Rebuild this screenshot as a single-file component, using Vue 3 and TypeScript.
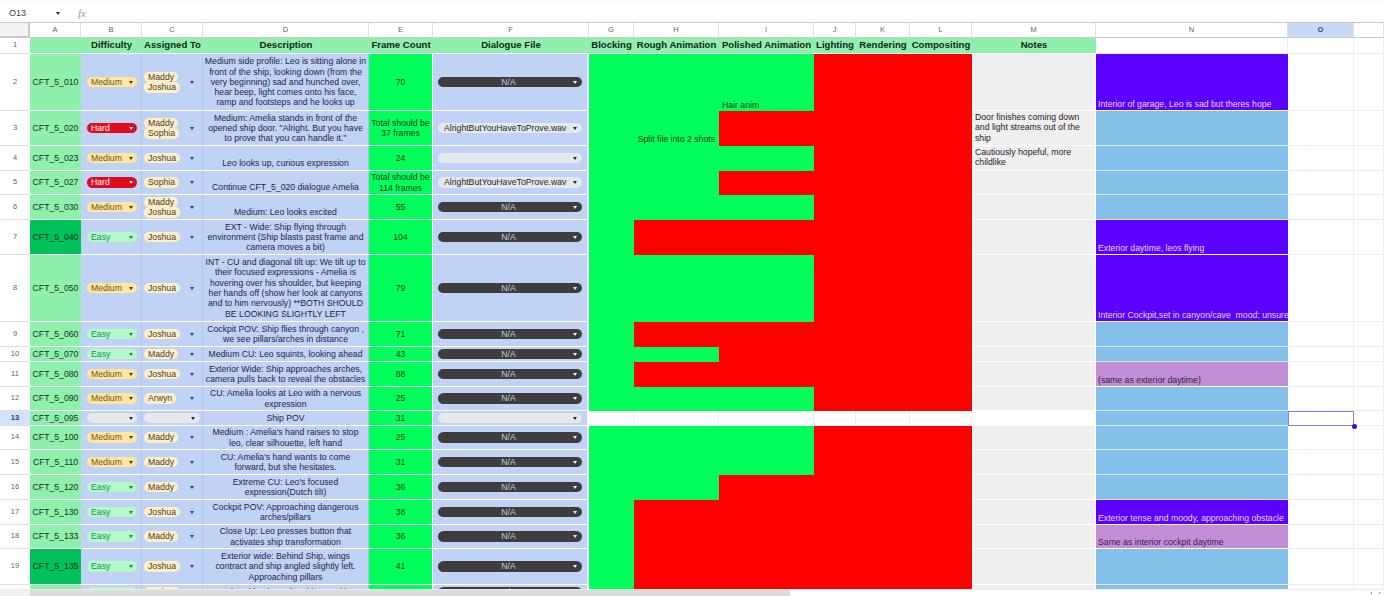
<script setup lang="ts">
interface Row {
  n: number
  h: number
  id: string
  diff: '' | 'Easy' | 'Medium' | 'Hard'
  who: string[]
  desc: string
  low?: boolean
  frames: string
  file: string
  red: number
  note?: string
  n2: 'blue' | 'purple' | 'lilac'
  n2text?: string
  dark?: boolean
}

const letters = ['A', 'B', 'C', 'D', 'E', 'F', 'G', 'H', 'I', 'J', 'K', 'L', 'M', 'N', 'O', '']
const heads = ['', 'Difficulty', 'Assigned To', 'Description', 'Frame Count', 'Dialogue File', 'Blocking', 'Rough Animation', 'Polished Animation', 'Lighting', 'Rendering', 'Compositing', 'Notes']
const wav = 'AlrightButYouHaveToProve.wav'

const rows: Row[] = [
  { n: 2, h: 57, id: 'CFT_5_010', diff: 'Medium', who: ['Maddy', 'Joshua'], desc: 'Medium side profile: Leo is sitting alone in front of the ship, looking down (from the very beginning) sad and hunched over, hear beep, light comes onto his face, ramp and footsteps and he looks up', frames: '70', file: 'N/A', red: 3, n2: 'purple', n2text: 'Interior of garage, Leo is sad but theres hope' },
  { n: 3, h: 35, id: 'CFT_5_020', diff: 'Hard', who: ['Maddy', 'Sophia'], desc: 'Medium: Amelia stands in front of the opened ship door. "Alright. But you have to prove that you can handle it."', frames: 'Total should be 37 frames', file: wav, red: 2, note: 'Door finishes coming down and light streams out of the ship', n2: 'blue' },
  { n: 4, h: 25, id: 'CFT_5_023', diff: 'Medium', who: ['Joshua'], desc: 'Leo looks up, curious expression', low: true, frames: '24', file: '', red: 3, note: 'Cautiously hopeful, more childlike', n2: 'blue' },
  { n: 5, h: 24, id: 'CFT_5_027', diff: 'Hard', who: ['Sophia'], desc: 'Continue CFT_5_020 dialogue Amelia', low: true, frames: 'Total should be 114 frames', file: wav, red: 2, n2: 'blue' },
  { n: 6, h: 25, id: 'CFT_5_030', diff: 'Medium', who: ['Maddy', 'Joshua'], desc: 'Medium: Leo looks excited', low: true, frames: '55', file: 'N/A', red: 3, n2: 'blue' },
  { n: 7, h: 35, id: 'CFT_5_040', diff: 'Easy', who: ['Joshua'], desc: 'EXT - Wide: Ship flying through environment (Ship blasts past frame and camera moves a bit)', frames: '104', file: 'N/A', red: 1, n2: 'purple', n2text: 'Exterior daytime, leos flying', dark: true },
  { n: 8, h: 67, id: 'CFT_5_050', diff: 'Medium', who: ['Joshua'], desc: 'INT - CU and diagonal tilt up: We tilt up to their focused expressions - Amelia is hovering over his shoulder, but keeping her hands off (show her look at canyons and to him nervously) **BOTH SHOULD BE LOOKING SLIGHTLY LEFT', frames: '79', file: 'N/A', red: 3, n2: 'purple', n2text: 'Interior Cockpit,set in canyon/cave  mood: unsure' },
  { n: 9, h: 25, id: 'CFT_5_060', diff: 'Easy', who: ['Joshua'], desc: 'Cockpit POV: Ship flies through canyon , we see pillars/arches in distance', frames: '71', file: 'N/A', red: 1, n2: 'blue' },
  { n: 10, h: 15, id: 'CFT_5_070', diff: 'Easy', who: ['Maddy'], desc: 'Medium CU: Leo squints, looking ahead', frames: '43', file: 'N/A', red: 2, n2: 'blue' },
  { n: 11, h: 25, id: 'CFT_5_080', diff: 'Medium', who: ['Joshua'], desc: 'Exterior Wide: Ship approaches arches, camera pulls back to reveal the obstacles', frames: '88', file: 'N/A', red: 1, n2: 'lilac', n2text: '(same as exterior daytime)' },
  { n: 12, h: 24, id: 'CFT_5_090', diff: 'Medium', who: ['Arwyn'], desc: 'CU: Amelia looks at Leo with a nervous expression', frames: '25', file: 'N/A', red: 3, n2: 'blue' },
  { n: 13, h: 15, id: 'CFT_5_095', diff: '', who: [], desc: 'Ship POV', frames: '31', file: '', red: -1, n2: 'blue' },
  { n: 14, h: 24, id: 'CFT_5_100', diff: 'Medium', who: ['Maddy'], desc: "Medium : Amelia's hand raises to stop\nleo, clear silhouette, left hand", frames: '25', file: 'N/A', red: 3, n2: 'blue' },
  { n: 15, h: 25, id: 'CFT_5_110', diff: 'Medium', who: ['Maddy'], desc: "CU: Amelia's hand wants to come forward, but she hesitates.", frames: '31', file: 'N/A', red: 3, n2: 'blue' },
  { n: 16, h: 25, id: 'CFT_5_120', diff: 'Easy', who: ['Maddy'], desc: "Extreme CU: Leo's focused expression(Dutch tilt)", frames: '36', file: 'N/A', red: 2, n2: 'blue' },
  { n: 17, h: 25, id: 'CFT_5_130', diff: 'Easy', who: ['Joshua'], desc: 'Cockpit POV: Approaching dangerous arches/pillars', frames: '38', file: 'N/A', red: 1, n2: 'purple', n2text: 'Exterior tense and moody, approaching obstacle' },
  { n: 18, h: 24, id: 'CFT_5_133', diff: 'Easy', who: ['Maddy'], desc: 'Close Up: Leo presses button that activates ship transformation', frames: '36', file: 'N/A', red: 1, n2: 'lilac', n2text: 'Same as interior cockpit daytime' },
  { n: 19, h: 36, id: 'CFT_5_135', diff: 'Easy', who: ['Joshua'], desc: 'Exterior wide: Behind Ship, wings\ncontract and ship angled slightly left.\nApproaching pillars', frames: '41', file: 'N/A', red: 1, n2: 'blue', dark: true },
  { n: 20, h: 16, id: 'CFT_5_137', diff: 'Easy', who: ['Joshua'], desc: 'Exterior Side view: The ship transitions', frames: '51', file: 'N/A', red: 1, n2: 'blue' },
]

const stages = [0, 1, 2, 3, 4, 5]
const rowTemplate = `15px 16px ${rows.map((r) => r.h + 'px').join(' ')}`

function stageClass(r: Row, i: number): string {
  if (r.red < 0) return 'stage-empty'
  return i >= r.red ? 'stage-red' : 'stage-green'
}

function stageText(r: Row, i: number): string {
  if (r.n === 2 && i === 2) return 'Hair anim'
  if (r.n === 3 && i === 1) return 'Split file into 2 shots'
  return ''
}
</script>

<template>
  <div class="page">
    <div class="topband"></div>
    <div class="formula">
      <span class="namebox">O13</span>
      <span class="arrow dark name-arrow"></span>
      <span class="fx">fx</span>
    </div>
    <div class="viewport">
      <div class="sheet" :style="{ gridTemplateRows: rowTemplate }">
        <div class="corner"></div>
        <div v-for="(l, i) in letters" :key="'col' + i" class="colhead" :class="{ on: l === 'O' }">{{ l }}</div>

        <div class="rowhead">1</div>
        <div v-for="(h, i) in heads" :key="'head' + i" class="title">{{ h }}</div>
        <div class="title-n"></div>
        <div class="blank"></div>
        <div class="blank"></div>

        <template v-for="r in rows" :key="r.n">
          <div class="rowhead" :class="{ on: r.n === 13 }">{{ r.n }}</div>
          <div class="cell shot" :class="{ dark: r.dark }">{{ r.id }}</div>
          <div class="cell blue chipcell">
            <span class="diff" :class="'d-' + (r.diff || 'none').toLowerCase()">
              <span>{{ r.diff }}</span><span class="arrow"></span>
            </span>
          </div>
          <div class="cell blue whocell">
            <template v-if="r.who.length">
              <div class="names">
                <span v-for="w in r.who" :key="w" class="name">{{ w }}</span>
              </div>
              <span class="arrow indigo"></span>
            </template>
            <span v-else class="noname"><span class="arrow dark"></span></span>
          </div>
          <div class="cell blue desc" :class="{ low: r.low }">
            <span>{{ r.desc }}</span>
          </div>
          <div class="cell frames">{{ r.frames }}</div>
          <div class="cell blue filecell">
            <span class="file" :class="r.file === 'N/A' ? 'file-na' : 'file-light'">
              <span class="file-text">{{ r.file }}</span>
              <span class="arrow"></span>
            </span>
          </div>
          <div v-for="i in stages" :key="i" class="stage" :class="[stageClass(r, i), 'st' + i]">
            <span>{{ stageText(r, i) }}</span>
          </div>
          <div class="notes" :class="{ empty: r.n === 13 }">{{ r.note }}</div>
          <div class="cue" :class="'cue-' + r.n2">
            <span>{{ r.n2text }}</span>
          </div>
          <div class="blank" :class="{ sel: r.n === 13 }">
            <template v-if="r.n === 13">
              <span class="selbox"></span>
              <span class="handle"></span>
            </template>
          </div>
          <div class="blank"></div>
        </template>
      </div>
    </div>
    <div class="scrollbar">
      <div class="track"></div>
      <div class="thumb"></div>
      <div class="rest"></div>
      <div class="nav"><span class="tri l"></span><span class="tri r"></span></div>
    </div>
  </div>
</template>

<style>
html, body { margin: 0; background: #fff; overflow: hidden; }
</style>

<style scoped>
.page {
  width: 1384px;
  height: 596px;
  display: flex;
  flex-direction: column;
  overflow: hidden;
  font-family: "Liberation Sans", Arial, sans-serif;
  font-size: 8.7px;
  line-height: 10.3px;
  color: #1c1c1c;
  background: #fff;
}
.topband { height: 4px; flex: none; background: #f9fbfd; }
.formula {
  height: 18px;
  flex: none;
  display: flex;
  align-items: center;
  border-bottom: 1px solid #c8cacb;
  color: #444;
  font-size: 9px;
}
.namebox { margin-left: 9px; width: 47px; }
.name-arrow { margin-right: 18px; }
.fx { font-family: "Liberation Serif", serif; font-style: italic; font-size: 11px; color: #9a9a9a; }

.viewport { flex: 1; min-height: 0; overflow: hidden; }
.sheet {
  display: grid;
  grid-template-columns: 30px 51px 61px 61px 166px 64px 156px 45px 85px 95px 42px 54px 62px 124px 192px 66px 30px;
}
.corner {
  background: #f1f3f4;
  border-right: 2px solid #c8cacb;
  border-bottom: 2px solid #c8cacb;
  box-sizing: border-box;
}
.colhead {
  box-sizing: border-box;
  display: flex;
  align-items: center;
  justify-content: center;
  border-right: 1px solid #e0e0e0;
  border-bottom: 1px solid #c8cacb;
  font-size: 7.5px;
  color: #5f6368;
}
.colhead.on { background: #c9daf8; font-weight: 700; color: #1f3a7a; }
.rowhead {
  box-sizing: border-box;
  display: flex;
  align-items: center;
  justify-content: center;
  border-bottom: 1px solid #e0e0e0;
  font-size: 7.5px;
  color: #5f6368;
}
.rowhead.on { background: #d3e3fd; font-weight: 700; color: #1f3a7a; }
.title {
  box-sizing: border-box;
  display: flex;
  align-items: center;
  justify-content: center;
  white-space: nowrap;
  background: #8ff0ae;
  border-bottom: 1px solid #fff;
  font-size: 9.6px;
  font-weight: 700;
  color: #14241a;
  overflow: hidden;
}
.title-n, .blank {
  box-sizing: border-box;
  position: relative;
  border-right: 1px solid #eee;
  border-bottom: 1px solid #eee;
}

.cell {
  box-sizing: border-box;
  display: flex;
  align-items: center;
  min-width: 0;
  border-bottom: 1px solid #fff;
}
.shot { background: #8ff0ae; justify-content: center; white-space: nowrap; color: #123020; }
.shot.dark { background: #00c25a; }
.blue { background: #c0d3f5; border-right: 1px solid #b2c6ea; }
.chipcell { padding-left: 6px; }
.diff {
  width: 49.5px;
  height: 10.5px;
  border-radius: 6px;
  display: flex;
  align-items: center;
  justify-content: space-between;
  padding: 0 4px 0 4px;
  box-sizing: border-box;
}
.d-medium { background: #ffe6a3; color: #6f5412; }
.d-easy { background: #b4f9c8; color: #14905a; }
.d-hard { background: #e00c1d; color: #fff; }
.d-none { background: #e6e9ec; color: #222; }
.arrow {
  flex: none;
  width: 0;
  height: 0;
  border-left: 2.5px solid transparent;
  border-right: 2.5px solid transparent;
  border-top: 3px solid currentColor;
}
.arrow.dark { color: #222; }
.arrow.indigo { color: #3326d8; }
.d-medium .arrow { color: #4a3a10; }
.d-easy .arrow { color: #0f8a50; }
.d-none .arrow { color: #222; }

.whocell { justify-content: space-between; padding: 0 8px 0 2px; }
.names { display: flex; flex-direction: column; align-items: flex-start; }
.name {
  background: #ffefc9;
  color: #4a3c2a;
  border-radius: 5px;
  padding: 0 4px;
  height: 10.5px;
  line-height: 10.5px;
}
.noname {
  flex: 1;
  margin-right: -6px;
  height: 10.5px;
  border-radius: 6px;
  background: #e6e9ec;
  display: flex;
  align-items: center;
  justify-content: flex-end;
  padding-right: 5px;
}
.desc { justify-content: center; text-align: center; color: #1f1f45; padding: 0 1.2px; white-space: pre-line; }
.desc.low { align-items: flex-end; padding-bottom: 2px; }
.frames {
  background: #00ff5a;
  justify-content: center;
  text-align: center;
  color: #0f3d20;
  padding: 0 2px;
  border-right: 1px solid #fff;
}
.filecell { padding: 0 5px; border-right: 2px solid #fff; }
.file {
  flex: 1;
  height: 10.5px;
  border-radius: 6px;
  display: flex;
  align-items: center;
  padding: 0 5px 0 6px;
}
.file-text { flex: 1; white-space: nowrap; overflow: hidden; }
.file-na { background: #3d3d3d; color: #c9ccd6; }
.file-na .file-text { text-align: center; }
.file-na .arrow { color: #eee; }
.file-light { background: #e6e9ec; color: #222; }
.file-light .arrow { color: #222; }

.stage {
  box-sizing: border-box;
  display: flex;
  align-items: flex-end;
  white-space: nowrap;
  color: #0d3d1d;
  padding-bottom: 1px;
}
.stage-green { background: #00ff5a; }
.stage-red { background: #ff0000; }
.stage-empty { border-right: 1px solid #eee; }
.st1 { justify-content: flex-end; padding-right: 4px; padding-bottom: 2px; }
.st2 { padding-left: 3px; }

.notes {
  box-sizing: border-box;
  background: #efefef;
  border-left: 1px solid #fff;
  border-right: 1px solid #fff;
  border-bottom: 1px solid #fff;
  padding: 1px 2px;
  color: #222;
  overflow: hidden;
}
.notes.empty { background: #fff; border-color: #fff; }
.cue {
  box-sizing: border-box;
  display: flex;
  align-items: flex-end;
  white-space: pre;
  overflow: hidden;
  padding: 0 0 1px 2px;
  border-bottom: 1px solid #dbeaf6;
}
.cue-blue { background: #84c0e8; }
.cue-purple { background: #5b00ff; color: #e6d9ff; border-bottom-color: #fff; }
.cue-lilac { background: #c28fd6; color: #33203f; border-bottom-color: #fff; }

.selbox {
  position: absolute;
  inset: 0 -1px -1px 0;
  border: 1.5px solid #9478f3;
}
.handle {
  position: absolute;
  right: -3.5px;
  bottom: -3.5px;
  width: 5px;
  height: 5px;
  border-radius: 50%;
  background: #2b10d8;
  z-index: 1;
}

.scrollbar { height: 7px; flex: none; display: flex; border-top: 1px solid #ececec; box-sizing: border-box; }
.track { width: 30px; background: #f1f1f1; }
.thumb { width: 760px; background: #dcdcdc; }
.rest { flex: 1; background: #fff; }
.nav { width: 18px; display: flex; align-items: center; justify-content: space-around; }
.tri { width: 0; height: 0; border-top: 1.5px solid transparent; border-bottom: 1.5px solid transparent; }
.tri.l { border-right: 2px solid #888; }
.tri.r { border-left: 2px solid #888; }
</style>
